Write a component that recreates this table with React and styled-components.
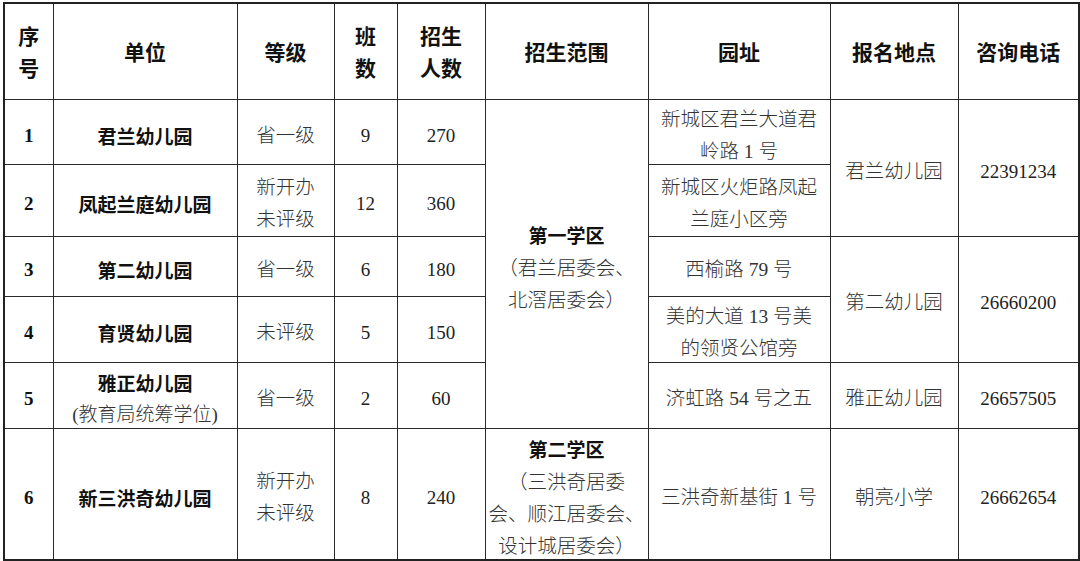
import React from 'react';
import styled, { createGlobalStyle } from 'styled-components';

const GlobalStyle = createGlobalStyle`
  html, body {
    margin: 0;
    padding: 0;
    background: #fff;
  }
`;

const columns = [49, 184, 97, 63, 88, 163, 182, 128, 121];

const headers = [
  ['序', '号'],
  ['单位'],
  ['等级'],
  ['班', '数'],
  ['招生', '人数'],
  ['招生范围'],
  ['园址'],
  ['报名地点'],
  ['咨询电话'],
];

const Lines = ({ items }) =>
  items.map((line, i) => (
    <React.Fragment key={i}>
      {i > 0 && <br />}
      {line}
    </React.Fragment>
  ));

// body cell: the td plus an inner block nudged down onto the reference baseline
const Cell = ({ children, tone, lh, ...rest }) => (
  <Td $tone={tone} $lh={lh} {...rest}>
    <Inner>{children}</Inner>
  </Td>
);

const App = () => (
  <>
    <GlobalStyle />
    <Page>
      <Table>
        <colgroup>
          {columns.map((w, i) => (
            <col key={i} style={{ width: w }} />
          ))}
        </colgroup>
        <thead>
          <Row $h={96}>
            {headers.map((h) => (
              <HeadCell key={h.join('')}>
                <Lines items={h} />
              </HeadCell>
            ))}
          </Row>
        </thead>
        <tbody>
          <Row $h={64}>
            <Cell tone="idx">1</Cell>
            <Cell tone="bold">君兰幼儿园</Cell>
            <Cell>省一级</Cell>
            <Cell tone="num">9</Cell>
            <Cell tone="num">270</Cell>
            <Cell rowSpan={5}>
              <Strong>第一学区</Strong>
              <br />
              （君兰居委会、
              <br />
              北滘居委会）
            </Cell>
            <Cell>
              <Lines items={['新城区君兰大道君', '岭路 1 号']} />
            </Cell>
            <Cell rowSpan={2}>君兰幼儿园</Cell>
            <Cell rowSpan={2} tone="num">22391234</Cell>
          </Row>
          <Row $h={72}>
            <Cell tone="idx">2</Cell>
            <Cell tone="bold">凤起兰庭幼儿园</Cell>
            <Cell>
              <Lines items={['新开办', '未评级']} />
            </Cell>
            <Cell tone="num">12</Cell>
            <Cell tone="num">360</Cell>
            <Cell>
              <Lines items={['新城区火炬路凤起', '兰庭小区旁']} />
            </Cell>
          </Row>
          <Row $h={60}>
            <Cell tone="idx">3</Cell>
            <Cell tone="bold">第二幼儿园</Cell>
            <Cell>省一级</Cell>
            <Cell tone="num">6</Cell>
            <Cell tone="num">180</Cell>
            <Cell>西榆路 79 号</Cell>
            <Cell rowSpan={2}>第二幼儿园</Cell>
            <Cell rowSpan={2} tone="num">26660200</Cell>
          </Row>
          <Row $h={66}>
            <Cell tone="idx">4</Cell>
            <Cell tone="bold">育贤幼儿园</Cell>
            <Cell>未评级</Cell>
            <Cell tone="num">5</Cell>
            <Cell tone="num">150</Cell>
            <Cell>
              <Lines items={['美的大道 13 号美', '的领贤公馆旁']} />
            </Cell>
          </Row>
          <Row $h={66}>
            <Cell tone="idx">5</Cell>
            <Cell tone="bold" lh={30}>
              雅正幼儿园
              <br />
              <Note>(教育局统筹学位)</Note>
            </Cell>
            <Cell>省一级</Cell>
            <Cell tone="num">2</Cell>
            <Cell tone="num">60</Cell>
            <Cell>济虹路 54 号之五</Cell>
            <Cell>雅正幼儿园</Cell>
            <Cell tone="num">26657505</Cell>
          </Row>
          <Row $h={130}>
            <Cell tone="idx">6</Cell>
            <Cell tone="bold">新三洪奇幼儿园</Cell>
            <Cell>
              <Lines items={['新开办', '未评级']} />
            </Cell>
            <Cell tone="num">8</Cell>
            <Cell tone="num">240</Cell>
            <Cell lh={32}>
              <Strong>第二学区</Strong>
              <br />
              （三洪奇居委
              <br />
              会、顺江居委会、
              <br />
              设计城居委会）
            </Cell>
            <Cell>三洪奇新基街 1 号</Cell>
            <Cell>朝亮小学</Cell>
            <Cell tone="num">26662654</Cell>
          </Row>
        </tbody>
      </Table>
    </Page>
  </>
);

export default App;

const Page = styled.div`
  padding: 2px 2px 0 3px;
`;

const Table = styled.table`
  width: 1075px;
  border-collapse: collapse;
  table-layout: fixed;
  border: 2px solid #222;
`;

const Row = styled.tr`
  height: ${(p) => p.$h}px;
`;

const HeadCell = styled.th`
  border: 1px solid #2a2a2a;
  padding: 0;
  text-align: center;
  vertical-align: middle;
  font-family: 'Noto Sans CJK SC', 'Liberation Sans', sans-serif;
  font-weight: 700;
  font-size: 21px;
  line-height: 32px;
  color: #111;
`;

const tones = {
  plain: `
    font-family: 'Liberation Serif', 'Noto Sans CJK SC', serif;
    font-weight: 300;
    font-size: 19.5px;
    color: #333;
  `,
  bold: `
    font-family: 'Noto Sans CJK SC', 'Liberation Sans', sans-serif;
    font-weight: 700;
    font-size: 19px;
    color: #111;
  `,
  num: `
    font-family: 'Liberation Serif', 'Noto Sans CJK SC', serif;
    font-weight: 400;
    font-size: 19px;
    color: #222;
  `,
  idx: `
    font-family: 'Liberation Serif', 'Noto Sans CJK SC', serif;
    font-weight: 700;
    font-size: 19px;
    color: #111;
  `,
};

const Td = styled.td`
  border: 1px solid #2a2a2a;
  padding: 0;
  text-align: center;
  vertical-align: middle;
  line-height: ${(p) => p.$lh || 32}px;
  white-space: nowrap;
  ${(p) => tones[p.$tone || 'plain']}
`;

const Inner = styled.span`
  display: block;
  transform: translateY(4px);
`;

const Strong = styled.span`
  font-family: 'Noto Sans CJK SC', 'Liberation Sans', sans-serif;
  font-weight: 700;
  font-size: 19px;
  color: #111;
`;

const Note = styled.span`
  font-family: 'Liberation Serif', 'Noto Sans CJK SC', serif;
  font-weight: 300;
  font-size: 19px;
  color: #333;
`;
